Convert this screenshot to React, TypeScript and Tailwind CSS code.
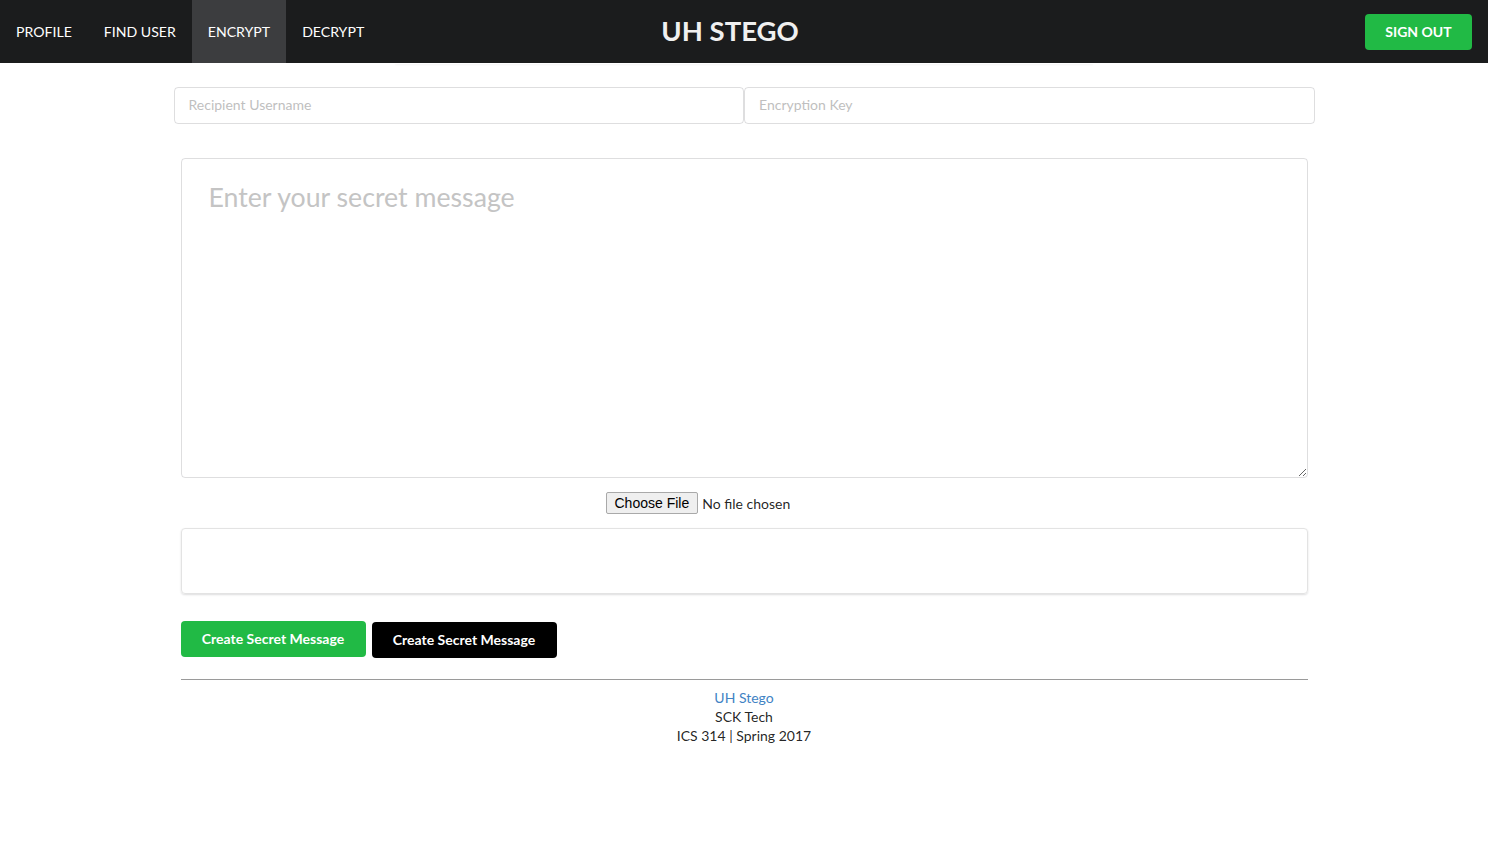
import React from "react";

const navItems = ["PROFILE", "FIND USER", "ENCRYPT", "DECRYPT"];

export default function App() {
  return (
    <div className="min-h-screen bg-white font-['Lato','Liberation_Sans',sans-serif] text-[14px] text-[rgba(0,0,0,0.87)]">
      <nav className="flex h-[63px] items-stretch bg-[#1b1c1d] text-white">
        <div className="flex flex-1 items-stretch">
          {navItems.map((item) => (
            <a
              key={item}
              className={
                "flex items-center px-4 text-[14.1px] " +
                (item === "ENCRYPT" ? "bg-[#3c3d3f]" : "")
              }
            >
              {item}
            </a>
          ))}
        </div>
        <div className="flex items-center pb-[2px]">
          <h1 className="mr-[12px] text-[27.5px] font-bold leading-none text-[#f0f0f0]">UH STEGO</h1>
        </div>
        <div className="flex flex-1 items-center justify-end pr-4">
          <button className="h-[36px] w-[107px] rounded-[4px] bg-[#21ba45] text-[14px] font-bold text-white">
            SIGN OUT
          </button>
        </div>
      </nav>

      <div className="mx-auto h-px w-[698px] shadow-[0_1px_2px_rgba(0,0,0,0.06)]" />

      <main className="mx-auto w-[1127px] pt-[23px]">
        <div className="-mx-[7px] flex">
          <input
            placeholder="Recipient Username"
            className="h-[37px] flex-1 rounded-[4px] border border-[rgba(34,36,38,0.15)] px-[14px] pb-[2px] text-[14px] outline-none placeholder:text-[#bfbfbf]"
          />
          <input
            placeholder="Encryption Key"
            className="h-[37px] flex-1 rounded-[4px] border border-[rgba(34,36,38,0.15)] px-[14px] pb-[2px] text-[14px] outline-none placeholder:text-[#bfbfbf]"
          />
        </div>

        <textarea
          placeholder="Enter your secret message"
          className="mt-[34px] block h-[320px] w-full resize-y rounded-[4px] border border-[rgba(34,36,38,0.15)] px-[27px] pt-[21px] pb-[12px] text-[26.7px] leading-[1.2857] outline-none placeholder:text-[#c4c4c4]"
        />

        <div className="mt-[14px] flex h-[22px] items-center pl-[425px]">
          <button className="h-[22px] rounded-[2px] border border-[#a9a9a9] bg-[#efefef] px-[8px] font-['Liberation_Sans',Arial,sans-serif] text-[14px] leading-none text-black">
            Choose File
          </button>
          <span className="ml-[4px] text-[14px]">No file chosen</span>
        </div>

        <div className="mt-[14px] h-[66px] rounded-[4px] border border-[#e3e3e3] shadow-[0_1px_2px_rgba(34,36,38,0.15)]" />

        <div className="mt-[27px] flex items-start gap-[6px]">
          <button className="h-[36px] w-[185px] rounded-[4px] bg-[#21ba45] pb-[2px] text-[14px] font-bold text-white">
            Create Secret Message
          </button>
          <button className="mt-px h-[36px] w-[185px] rounded-[4px] bg-black pb-[2px] text-[14px] font-bold text-white">
            Create Secret Message
          </button>
        </div>

        <hr className="mt-[21px] border-t border-[#9a9a9a]" />

        <footer className="pt-[8px] text-center text-[14px] leading-[19px]">
          <a className="block text-[#4183c4]">UH Stego</a>
          <div>SCK Tech</div>
          <div>ICS 314 | Spring 2017</div>
        </footer>
      </main>
    </div>
  );
}
